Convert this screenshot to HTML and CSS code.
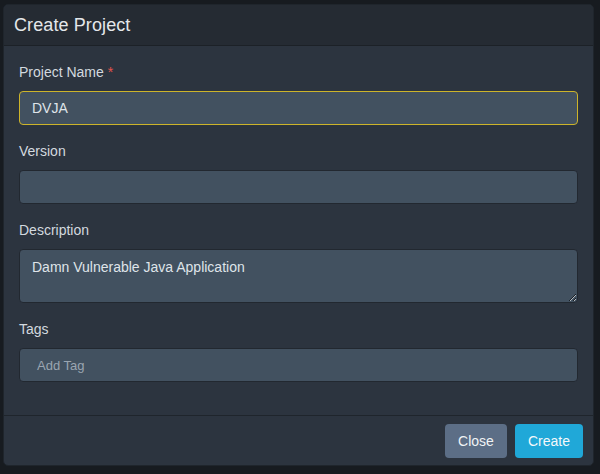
FILE: index.html
```html
<!DOCTYPE html>
<html>
<head>
<meta charset="utf-8">
<link rel="stylesheet" href="styles.css">
</head>
<body>
<div class="backdrop">
  <div class="modal">
    <div class="modal-header">
      <h5 class="modal-title">Create Project</h5>
    </div>
    <div class="modal-body">
      <div class="form-group">
        <label class="form-label">Project Name <span class="req">*</span></label>
        <input class="form-control focused" type="text" value="DVJA">
      </div>
      <div class="form-group">
        <label class="form-label">Version</label>
        <input class="form-control" type="text" value="">
      </div>
      <div class="form-group">
        <label class="form-label">Description</label>
        <textarea class="form-control textarea">Damn Vulnerable Java Application</textarea>
      </div>
      <div class="form-group">
        <label class="form-label">Tags</label>
        <div class="form-control tags"><span class="placeholder">Add Tag</span></div>
      </div>
    </div>
    <div class="modal-footer">
      <button class="btn btn-secondary">Close</button>
      <button class="btn btn-primary">Create</button>
    </div>
  </div>
</div>
</body>
</html>
```
FILE: styles.css
```css
* { box-sizing: border-box; }
html, body { margin: 0; padding: 0; }
body {
  width: 600px;
  height: 474px;
  background: #171b20;
  font-family: "Liberation Sans", Arial, sans-serif;
  font-size: 14px;
  color: #d8dde3;
  overflow: hidden;
}
.backdrop {
  padding: 4px 0 0 3px;
}
.modal {
  width: 591px;
  height: 462px;
  background: #2c343f;
  border: 1px solid #1f252c;
  border-radius: 5px;
  display: flex;
  flex-direction: column;
  overflow: hidden;
}
.modal-header {
  height: 41px;
  background: #252b33;
  border-bottom: 1px solid #1c2127;
  padding: 0 10px;
  display: flex;
  align-items: center;
}
.modal-title {
  margin: 0;
  font-size: 18px;
  font-weight: normal;
  color: #e4e7ea;
  letter-spacing: 0.1px;
}
.modal-body {
  padding: 16px 15px 0 15px;
  flex: 1;
}
.form-group {
  margin-bottom: 16px;
  display: flex;
  flex-direction: column;
}
.form-label {
  line-height: 21px;
  margin-bottom: 8px;
  color: #d3d9df;
}
.req { color: #e5534b; }
.form-control {
  display: block;
  width: 559px;
  height: 34px;
  background: #425160;
  border: 1px solid #222830;
  border-radius: 4px;
  color: #dfe4e9;
  font-family: inherit;
  font-size: 14px;
  padding: 0 12px;
  outline: none;
}
.focused {
  border-color: #cdb42a;
}
.textarea {
  height: 54px;
  padding: 8px 12px;
  line-height: 19px;
  resize: vertical;
}
.tags {
  display: flex;
  align-items: center;
  padding-left: 17px;
}
.placeholder {
  font-size: 13px;
  color: #9aa5b1;
  padding-top: 1px;
}
.modal-footer {
  border-top: 1px solid #1f252c;
  padding: 8px 10px 7px;
  display: flex;
  justify-content: flex-end;
  gap: 8px;
}
.btn {
  height: 34px;
  border: none;
  border-radius: 4px;
  font-family: inherit;
  font-size: 14px;
  color: #f0f3f5;
  padding: 0 12px;
}
.btn-secondary {
  width: 62px;
  background: #5c6e86;
}
.btn-primary {
  width: 68px;
  background: #20a8d8;
  color: #f4f8fb;
}
```
